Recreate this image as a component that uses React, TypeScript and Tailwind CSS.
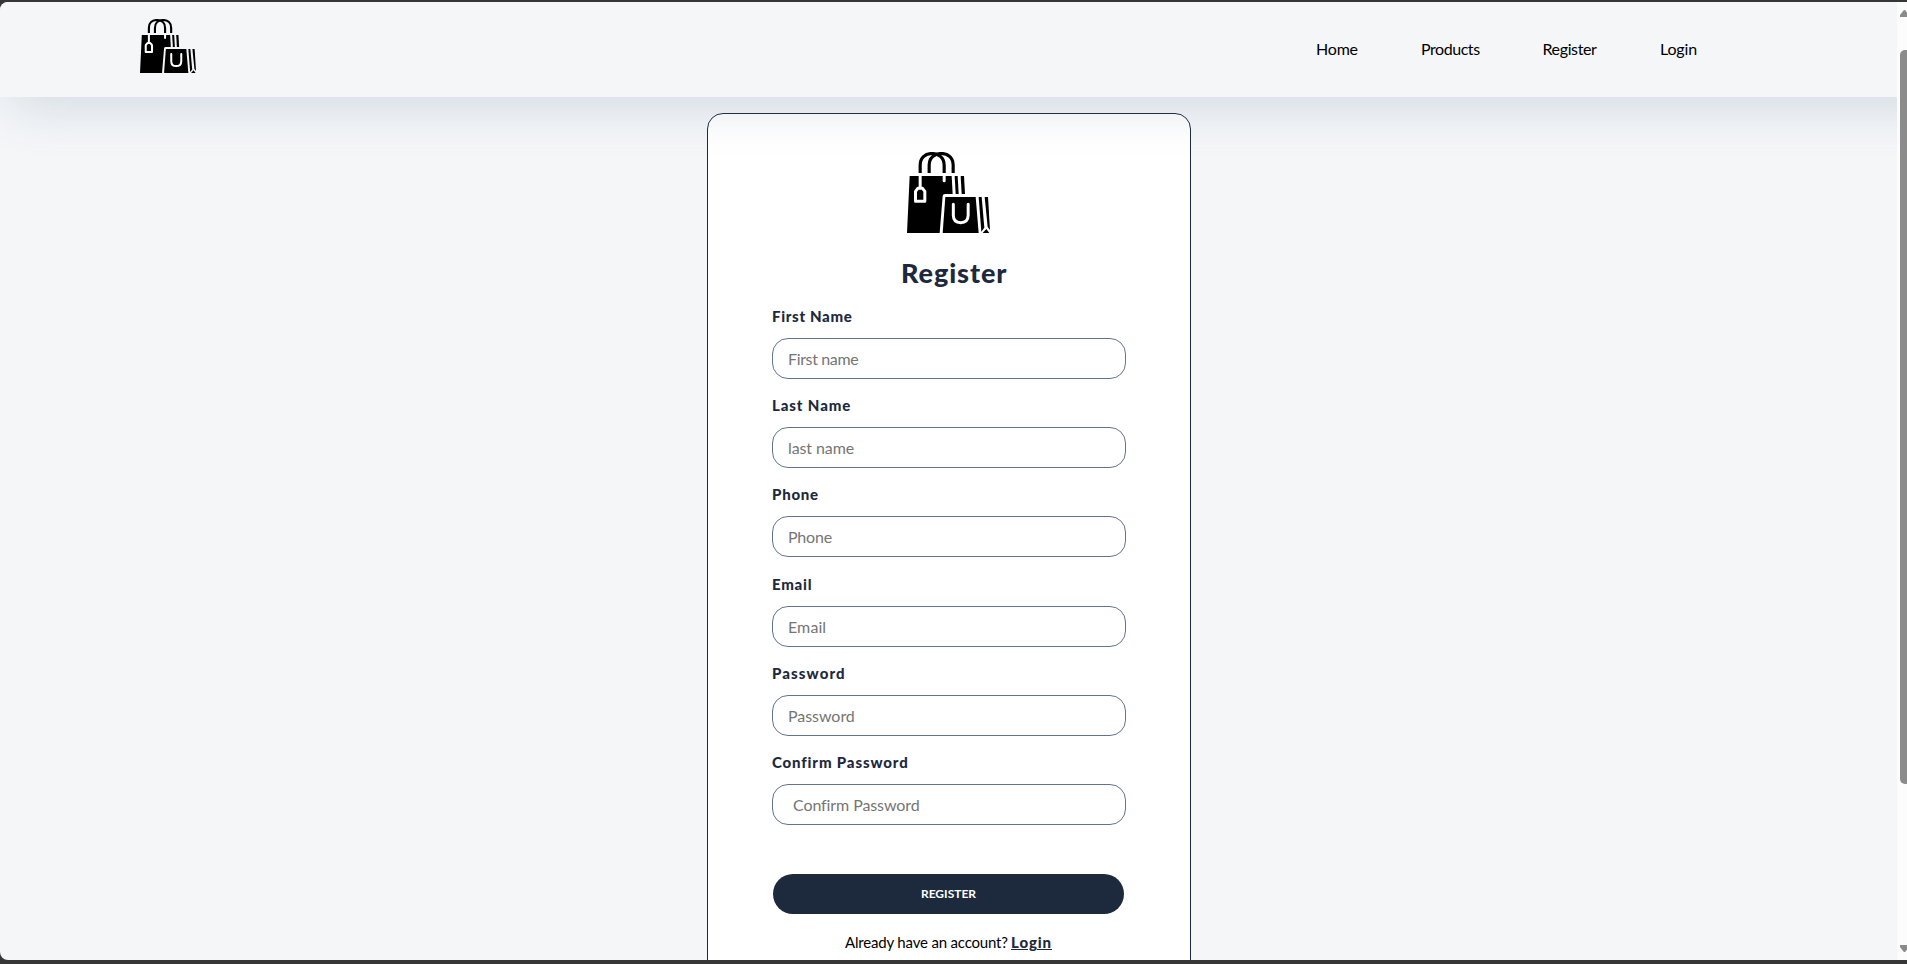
type Field = {
  label: string;
  labelTracking: string;
  placeholder: string;
  inputClass: string;
  type?: string;
};

const fields: Field[] = [
  { label: "First Name", labelTracking: "tracking-[0.68px]", placeholder: "First name", inputClass: "pl-[15px] tracking-[-0.35px]" },
  { label: "Last Name", labelTracking: "tracking-[0.9px]", placeholder: "last name", inputClass: "pl-[15px] tracking-[-0.1px]" },
  { label: "Phone", labelTracking: "tracking-[0.75px]", placeholder: "Phone", inputClass: "pl-[15px] tracking-[-0.2px]" },
  { label: "Email", labelTracking: "tracking-[0.75px]", placeholder: "Email", inputClass: "pl-[15px] tracking-[0.1px]" },
  { label: "Password", labelTracking: "tracking-[1.1px]", placeholder: "Password", inputClass: "pl-[15px] tracking-[-0.05px]", type: "password" },
  { label: "Confirm Password", labelTracking: "tracking-[0.86px]", placeholder: "Confirm Password", inputClass: "pl-5 tracking-[-0.1px]", type: "password" },
];

const links = [
  { text: "Home", className: "w-[105px] tracking-[-0.2px]" },
  { text: "Products", className: "w-[121.5px] tracking-[-0.45px]" },
  { text: "Register", className: "w-[117.5px] tracking-[-0.38px]" },
  { text: "Login", className: "w-[37px] tracking-[-0.15px]" },
];

function BagsLogo({ className }: { className: string }) {
  return (
    <svg viewBox="52 36 249 243" preserveAspectRatio="none" className={className} aria-hidden="true">
      <g fill="none" stroke="#000" strokeWidth="9.5">
        <path d="M91.5 99V76C91.5 54 106 40.5 127 40.5S163.500 54 163.500 76V99" />
        <path d="M118.500 99V76C118.500 54 134 40.500 155 40.500S190.500 54 190.500 76V99" />
      </g>
      <path d="M60 108H186L189 162H166Q160 162 159 168L150 279H52Z" />
      <path d="M195 108H204L207 162H198Z" />
      <path d="M213 108H223L226 162H216Z" />
      <path d="M167 171H258L267 279H159Z" />
      <path d="M267 171H276L284 263L275 275Z" />
      <path d="M285 171H295L301 270L294 261Z" />
      <path d="M279 279L290 267L299 279Z" />
      <g fill="none" stroke="#fff">
        <path d="M163.500 107V122" strokeWidth="9" strokeLinecap="round" />
        <path d="M91.500 107V144" strokeWidth="9" />
        <path d="M77.500 184V154L85 144.500H98L105.500 154V184Z" strokeWidth="9" strokeLinejoin="round" />
        <path d="M191 193V226Q191 248 213 248T235.500 226V193" strokeWidth="9" strokeLinecap="round" />
      </g>
    </svg>
  );
}

function Scrollbar() {
  return (
    <div className="flex w-[10px] shrink-0 flex-col overflow-hidden bg-[#fcfcfc] pl-[3px]">
      <svg viewBox="0 0 7 7" className="mt-2 h-[7px] w-[7px]" aria-hidden="true">
        <path d="M0 7V5L3.500 0.500Q4.500 -0.500 5.500 0.500L7 2.500V7Z" fill="#8b8b8b" />
      </svg>
      <div className="mt-[33px] h-[734px] w-[11px] rounded-[5px] bg-[#8b8b8b]" />
      <svg viewBox="0 0 7 7" className="mt-[161px] h-[7px] w-[7px]" aria-hidden="true">
        <path d="M0 0V2L3.500 6.500Q4.500 7.500 5.500 6.500L7 4.500V0Z" fill="#8b8b8b" />
      </svg>
    </div>
  );
}

export default function App() {
  return (
    <div className="h-[964px] overflow-hidden bg-[#363636] pt-[2px] pb-1 font-['Lato',sans-serif]">
      <div className="flex h-[958px] overflow-hidden rounded-l-[8px] bg-[#f4f6f8]">
        <div className="min-w-0 flex-1 overflow-hidden">
          <header className="relative z-10 flex h-[95px] w-[2000px] items-start bg-[#f4f6f8] pl-[140px] shadow-[0_20px_50px_-12px_rgba(100,125,155,0.24)]">
            <BagsLogo className="mt-[17px] h-[54px] w-[56px]" />
            <nav className="mt-[35px] ml-[1120px] flex text-base leading-6 text-black">
              {links.map((link) => (
                <a key={link.text} href="#" className={link.className}>
                  {link.text}
                </a>
              ))}
            </nav>
          </header>

          <main className="mt-4 ml-[707px] h-[1000px] w-[484px] rounded-2xl border border-slate-800 bg-white px-16 pt-[38px]">
            <BagsLogo className="ml-[135px] h-[81px] w-[83px]" />
            <h1 className="mt-[22px] ml-[129px] text-[27px] leading-9 font-black tracking-[0.9px] text-slate-800">
              Register
            </h1>

            <form>
              <div className="mt-[15px]">
                {fields.map((field) => (
                  <div key={field.label} className="h-[89.2px]">
                    <label className={`block text-[15px] leading-5 font-black text-slate-800 ${field.labelTracking}`}>
                      {field.label}
                    </label>
                    <input
                      type={field.type ?? "text"}
                      placeholder={field.placeholder}
                      className={`mt-3 block h-[41px] w-[354px] rounded-2xl border border-slate-500 bg-white text-base text-black placeholder:text-[#757575] ${field.inputClass}`}
                    />
                  </div>
                ))}
              </div>
              <button
                type="button"
                className="mt-[33px] ml-px block h-10 w-[351px] rounded-full bg-slate-800 text-center text-xs font-bold text-white"
              >
                REGISTER
              </button>
            </form>

            <p className="mt-[18px] ml-[73px] text-[15px] leading-5 whitespace-nowrap text-black">
              <span className="inline-block w-[166px] tracking-[-0.18px]">Already have an account?</span>
              <a href="#" className="font-black tracking-[0.9px] text-slate-800 underline">
                Login
              </a>
            </p>
          </main>
        </div>
        <Scrollbar />
      </div>
    </div>
  );
}
